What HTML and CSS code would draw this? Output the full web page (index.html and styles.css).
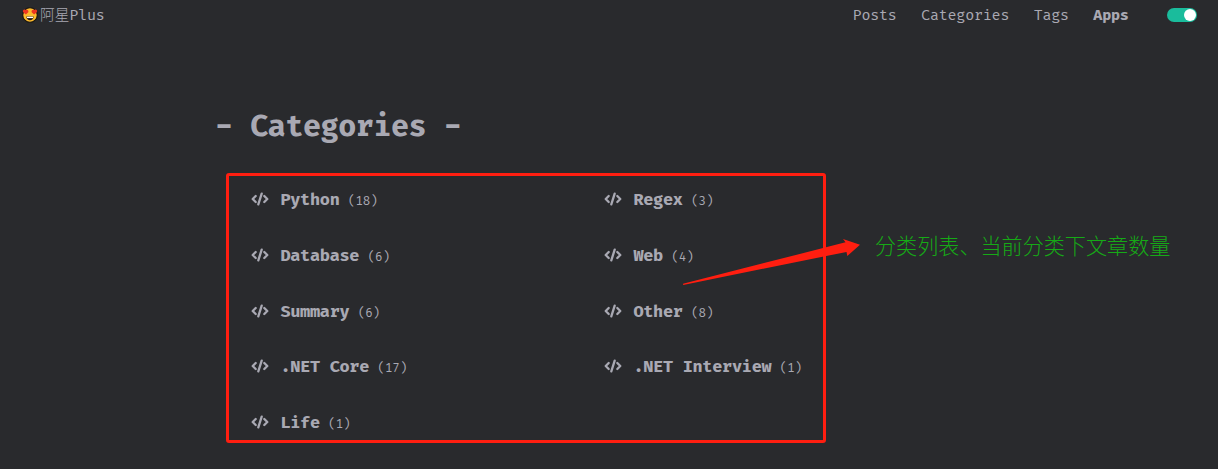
FILE: index.html
```html
<!DOCTYPE html>
<html lang="zh-CN">
<head>
<meta charset="utf-8">
<title>Categories</title>
<link rel="stylesheet" href="styles.css">
</head>
<body>
<svg class="defs" aria-hidden="true">
  <symbol id="code" viewBox="0 0 18 14">
    <path d="M4.7 4 1.7 7l3 3M13.3 4 16.3 7l-3 3M10.7 1.6 7.3 12.4" fill="none" stroke="currentColor" stroke-width="2.3" stroke-linecap="round" stroke-linejoin="round"/>
  </symbol>
</svg>
<header class="navbar">
  <a class="brand">
    <svg class="emoji" viewBox="0 0 16 16">
      <circle cx="8" cy="8" r="7.3" fill="#fcba2d" stroke="#141210" stroke-width="1.1"/>
      <path d="M3.9 7.5 1.1 5.3C.2 3 2.3 1.9 3.6 3.1 5.1 1.9 7 3.2 6.3 5.2ZM12.1 7.5 9.7 5.2C9 3.2 10.9 1.9 12.4 3.1c1.3-1.2 3.4-.1 2.5 2.2Z" fill="#ed3520"/>
      <path d="M4.4 9.5h7.2c0 5-7.2 5-7.2 0Z" fill="#241812"/>
      <path d="M5 9.7h6v1.4H5z" fill="#fff"/>
    </svg><span class="han">阿星</span><span class="plus">Plus</span>
  </a>
  <nav class="menu">
    <a>Posts</a><a>Categories</a><a>Tags</a><a class="bold">Apps</a>
    <span class="switch"><span class="knob"></span></span>
  </nav>
</header>
<main class="content">
  <h1 class="title">- Categories -</h1>
  <div class="grid">
    <div class="item"><svg class="icon"><use href="#code"/></svg><span class="name">Python</span><span class="count">(18)</span></div>
    <div class="item"><svg class="icon"><use href="#code"/></svg><span class="name">Regex</span><span class="count">(3)</span></div>
    <div class="item"><svg class="icon"><use href="#code"/></svg><span class="name">Database</span><span class="count">(6)</span></div>
    <div class="item"><svg class="icon"><use href="#code"/></svg><span class="name">Web</span><span class="count">(4)</span></div>
    <div class="item"><svg class="icon"><use href="#code"/></svg><span class="name">Summary</span><span class="count">(6)</span></div>
    <div class="item"><svg class="icon"><use href="#code"/></svg><span class="name">Other</span><span class="count">(8)</span></div>
    <div class="item"><svg class="icon"><use href="#code"/></svg><span class="name">.NET Core</span><span class="count">(17)</span></div>
    <div class="item"><svg class="icon"><use href="#code"/></svg><span class="name">.NET Interview</span><span class="count">(1)</span></div>
    <div class="item"><svg class="icon"><use href="#code"/></svg><span class="name">Life</span><span class="count">(1)</span></div>
  </div>
</main>
<div class="frame"></div>
<svg class="arrow" viewBox="0 0 180 56">
  <path d="M3 53.8 165.5 12.3 163 9 180 14.7 167.3 26 166.5 21.9 3.2 55Z" fill="#ff1e10"/>
</svg>
<div class="note">分类列表、当前分类下文章数量</div>
</body>
</html>
```
FILE: styles.css
```css
* { box-sizing: border-box; }
body {
  margin: 0;
  height: 469px;
  overflow: hidden;
  background: #292a2d;
  color: #a9a9b3;
  font-family: "Fira Code", "DejaVu Sans Mono", "Noto Sans CJK SC", monospace;
  font-size: 14.67px;
  letter-spacing: -0.2px;
}
.defs { position: absolute; width: 0; height: 0; }
.navbar {
  display: flex;
  justify-content: space-between;
  height: 30px;
  padding: 0 21px 0 22px;
}
.brand, .menu { display: flex; align-items: center; line-height: 30px; }
.menu a, .plus { line-height: 28px; padding-top: 2px; }
.emoji { width: 16px; height: 16px; margin-right: 2px; }
.han { font-family: "Noto Sans CJK SC", sans-serif; font-weight: 300; font-size: 14.67px; letter-spacing: 0; line-height: 28px; padding-bottom: 2px; }
.menu { gap: 24.4px; }
.bold { font-weight: bold; }
.switch {
  display: flex;
  justify-content: flex-end;
  width: 30px;
  height: 14px;
  margin-left: 14px;
  margin-bottom: 1px;
  padding: 1px;
  border-radius: 7px;
  background: #1abc9c;
}
.knob { width: 12px; height: 12px; border-radius: 50%; background: #fff; }
.content { padding: 77px 0 0 215px; }
.title { margin: 0; font-size: 29.33px; letter-spacing: -0.45px; line-height: 40px; white-space: pre; }
.grid {
  display: grid;
  grid-template-columns: 353px 353px;
  grid-auto-rows: 55.75px;
  padding: 25px 0 0 36px;
}
.item { display: flex; align-items: baseline; line-height: 56px; white-space: pre; }
.icon { width: 18px; height: 14px; margin-right: 11.4px; position: relative; top: 1px; }
.name { font-size: 16.5px; letter-spacing: -0.3px; font-weight: bold; }
.count { margin-left: 8.5px; font-size: 12.2px; letter-spacing: -0.13px; }
.frame {
  position: absolute;
  left: 226px;
  top: 173px;
  width: 600px;
  height: 270px;
  border: 3px solid #ff1e10;
  border-radius: 3px;
}
.arrow { position: absolute; left: 680px; top: 230px; width: 180px; height: 56px; overflow: visible; }
.note {
  position: absolute;
  left: 875px;
  top: 230px;
  color: #16aa16;
  font: 300 21.1px/30px "Noto Sans CJK SC", sans-serif;
  letter-spacing: 0;
  white-space: nowrap;
}
```
